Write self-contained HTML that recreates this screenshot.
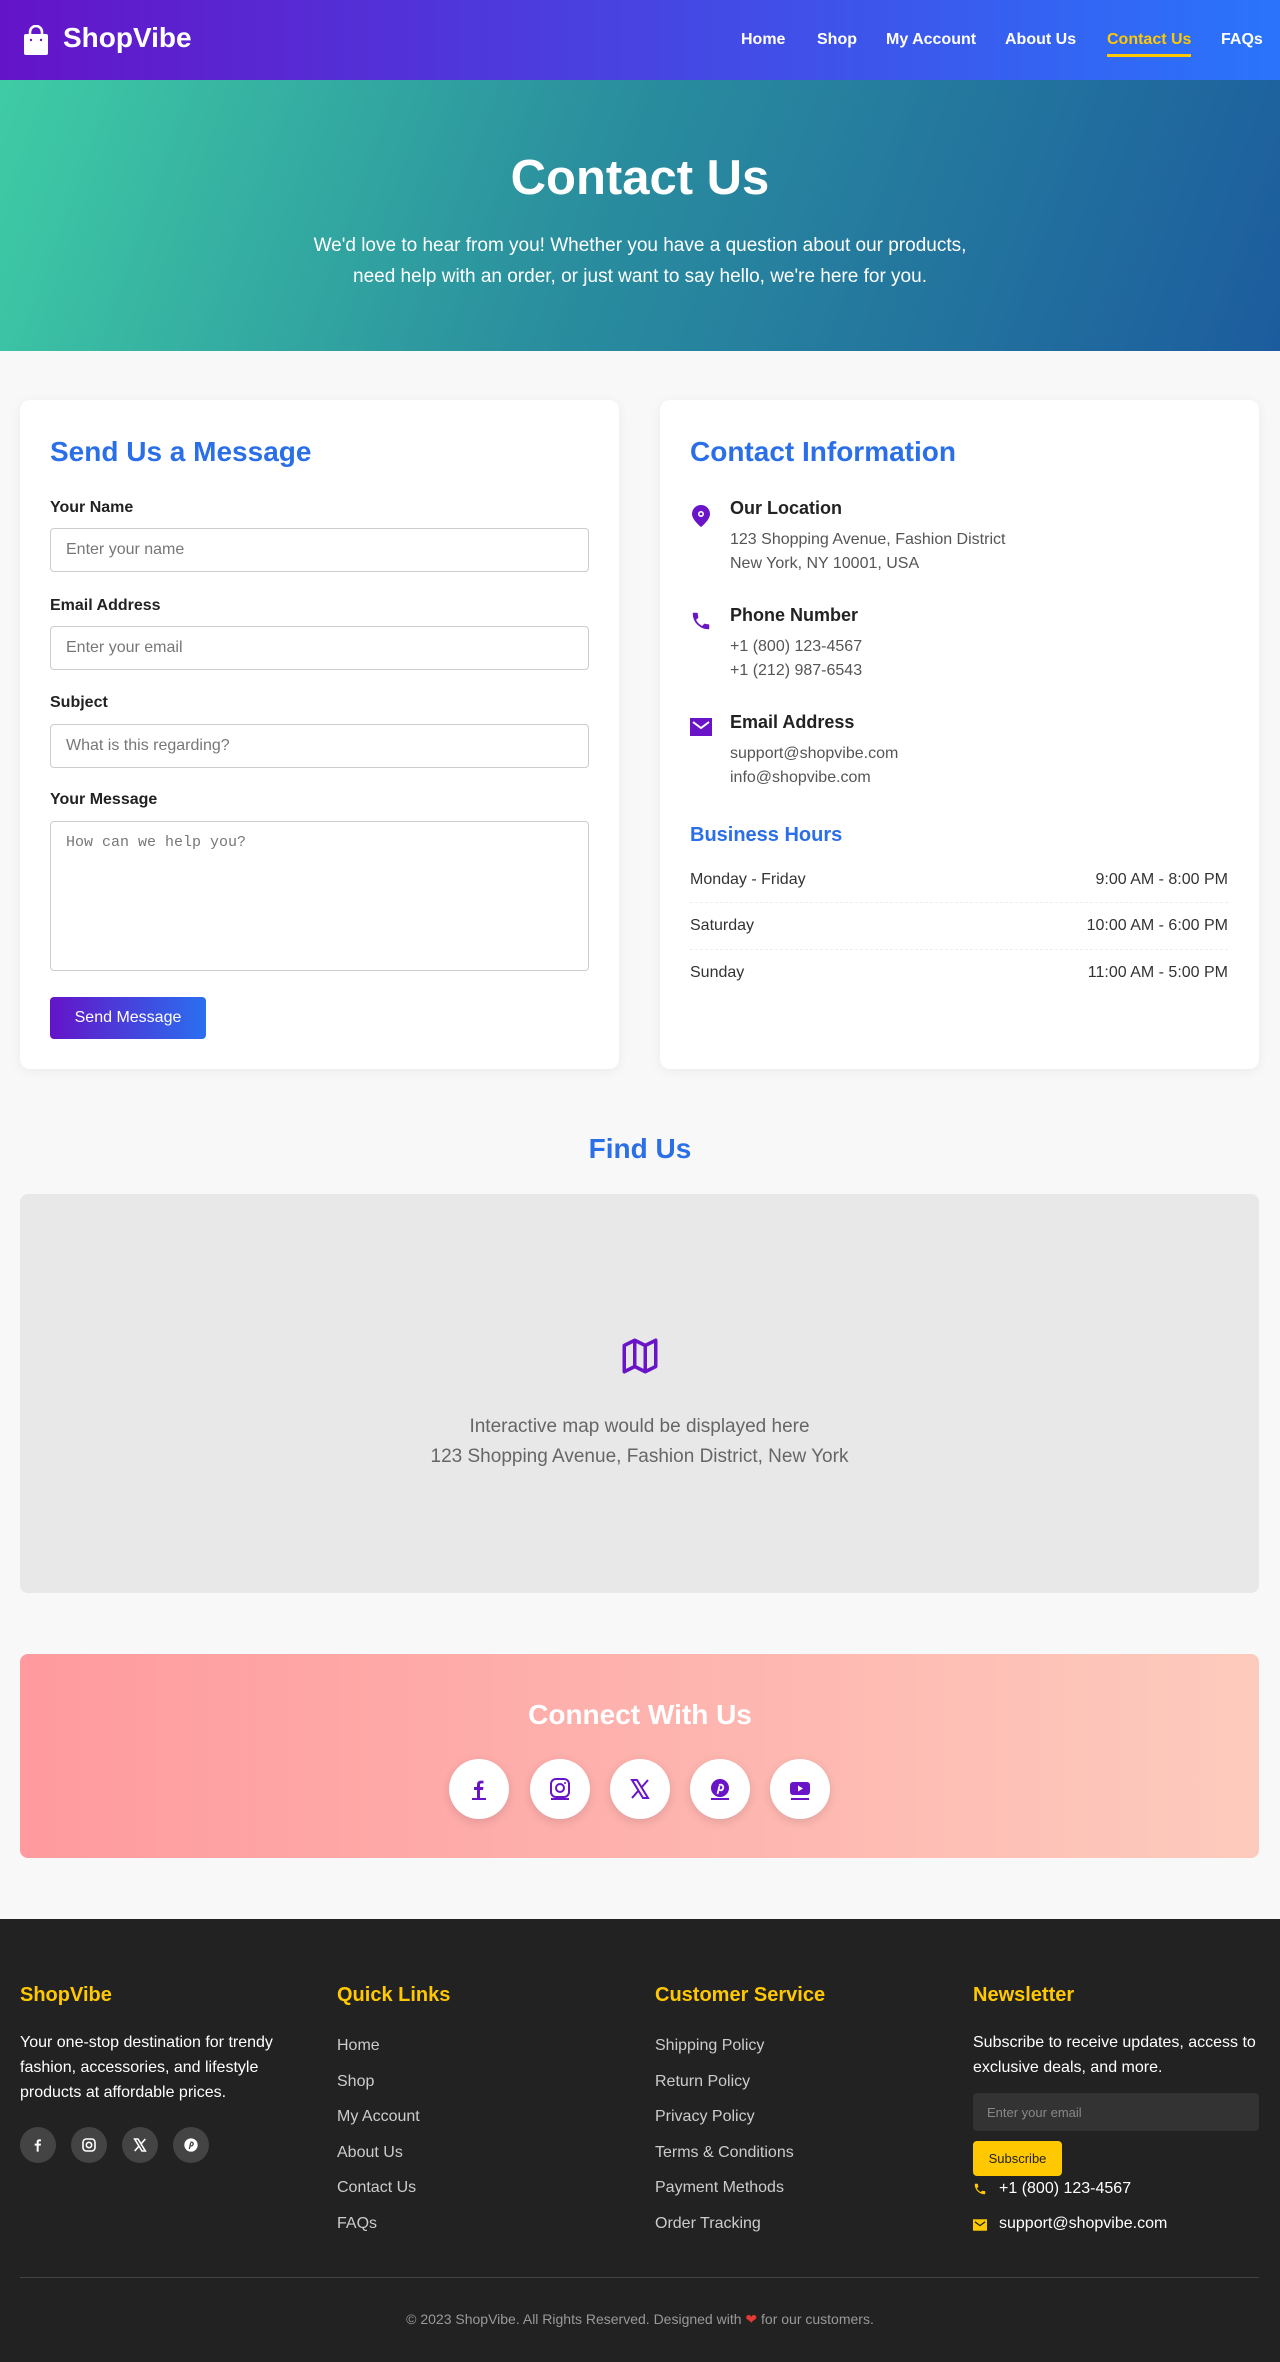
<!DOCTYPE html>
<html><head><meta charset="utf-8"><style>
*{box-sizing:border-box;margin:0;padding:0}
body{width:1280px;height:2362px;background:#f8f8f8;font-family:"Liberation Sans",sans-serif;color:#333;position:relative;overflow:hidden}
.abs{position:absolute}
nav{position:absolute;left:0;top:0;width:1280px;height:80px;background:linear-gradient(90deg,#6414c8,#2a74fb)}
.logo{position:absolute;left:63px;top:22px;color:#fff;font-weight:bold;font-size:28px}
.nav a{position:absolute;top:31px;color:#fff;font-weight:bold;font-size:16px;text-decoration:none}
.hero{position:absolute;top:80px;left:0;width:1280px;height:271px;background:linear-gradient(110deg,#3fcca5,#2a8f9e 45%,#1c5c9e);text-align:center;color:#fff}
.hero h1{position:absolute;top:70px;width:100%;font-size:49px}
.hero p{position:absolute;top:150px;width:100%;font-size:19px;line-height:31px}
.card{position:absolute;top:400px;height:669px;width:599px;background:#fff;border-radius:10px;box-shadow:0 2px 12px rgba(0,0,0,.06)}
.card h2{position:absolute;left:30px;top:36px;color:#2a6fe8;font-size:28px;white-space:nowrap}
.lbl{position:absolute;left:30px;font-size:16px;font-weight:bold;color:#222}
.inp{position:absolute;left:30px;width:539px;height:44px;border:1px solid #ccc;border-radius:4px;padding:12px 15px;font-size:16px;color:#777}
.ib{position:absolute;left:70px;font-size:18px;font-weight:bold;color:#222;white-space:nowrap}
.it{position:absolute;left:70px;font-size:16px;line-height:24px;color:#555;white-space:nowrap}
.ico{position:absolute;left:30px}
.hr{position:absolute;left:30px;width:538px;font-size:16px;color:#333}
.hr span{position:absolute;right:0}
.dv{position:absolute;left:30px;width:538px;border-top:1px dashed #eee}
.soc{position:absolute;top:1759px;width:60px;height:60px;border-radius:50%;background:#fff;box-shadow:0 3px 10px rgba(0,0,0,.12)}
.soc svg{position:absolute;left:18px;top:18px}
footer{position:absolute;top:1919px;left:0;width:1280px;height:443px;background:#222}
.fh{position:absolute;top:65px;color:#ffc800;font-size:20px;font-weight:bold}
.fl{position:absolute;font-size:16px;color:#ccc;line-height:35.5px}
.fs{position:absolute;top:2127px;width:36px;height:36px;border-radius:50%;background:#444}
.fs svg{position:absolute;left:10px;top:10px}
</style></head><body>
<nav>
<svg class="abs" style="left:23px;top:25px" width="26" height="30" viewBox="0 0 26 30"><path d="M7 11V7a6 6 0 0 1 12 0v4" fill="none" stroke="#fff" stroke-width="2.6"/><rect x="1" y="9" width="24" height="21" rx="2" fill="#fff"/><circle cx="8" cy="15" r="1.2" fill="#6414c8"/><circle cx="18" cy="15" r="1.2" fill="#6414c8"/></svg>
<div class="logo">ShopVibe</div>
<div class="nav">
<a style="left:741px">Home</a><a style="left:817px">Shop</a><a style="left:886px">My Account</a><a style="left:1005px">About Us</a><a style="left:1107px;color:#ffc800;border-bottom:3px solid #ffc800;padding-bottom:5px">Contact Us</a><a style="left:1221px">FAQs</a>
</div></nav>
<div class="hero"><h1>Contact Us</h1><p>We'd love to hear from you! Whether you have a question about our products,<br>need help with an order, or just want to say hello, we're here for you.</p></div>

<div class="card" style="left:20px">
<h2>Send Us a Message</h2>
<div class="lbl" style="top:99px">Your Name</div><div class="inp" style="top:128px">Enter your name</div>
<div class="lbl" style="top:197px">Email Address</div><div class="inp" style="top:226px">Enter your email</div>
<div class="lbl" style="top:294px">Subject</div><div class="inp" style="top:324px">What is this regarding?</div>
<div class="lbl" style="top:391px">Your Message</div><div class="inp" style="top:421px;height:150px;font-family:'Liberation Mono',monospace;font-size:15px">How can we help you?</div>
<div class="abs" style="left:30px;top:597px;width:156px;height:42px;border-radius:4px;background:linear-gradient(90deg,#6414c8,#2a6ff0);color:#fff;font-size:16px;text-align:center;line-height:42px">Send Message</div>
</div>

<div class="card" style="left:660px">
<h2>Contact Information</h2>
<svg class="ico" style="top:104px" width="22" height="24" viewBox="0 0 22 24"><path d="M11 1a9 9 0 0 0-9 9c0 6 9 13 9 13s9-7 9-13a9 9 0 0 0-9-9z" fill="#6a14c8"/><circle cx="11" cy="10" r="3" fill="#fff"/><circle cx="11" cy="10" r="1.4" fill="#6a14c8"/></svg>
<div class="ib" style="top:98px">Our Location</div>
<div class="it" style="top:128px">123 Shopping Avenue, Fashion District<br>New York, NY 10001, USA</div>
<svg class="ico" style="top:210px" width="22" height="22" viewBox="0 0 24 24"><path d="M6.6 10.8a15 15 0 0 0 6.6 6.6l2.2-2.2c.3-.3.7-.4 1-.2 1.1.4 2.3.6 3.6.6.6 0 1 .4 1 1V20c0 .6-.4 1-1 1A17 17 0 0 1 3 4c0-.6.4-1 1-1h3.5c.6 0 1 .4 1 1 0 1.3.2 2.5.6 3.6.1.3 0 .7-.2 1z" fill="#6a14c8"/></svg>
<div class="ib" style="top:205px">Phone Number</div>
<div class="it" style="top:235px">+1 (800) 123-4567<br>+1 (212) 987-6543</div>
<svg class="ico" style="top:318px" width="22" height="18" viewBox="0 0 22 18"><rect width="22" height="18" fill="#6a14c8"/><path d="M3 4l8 6 8-6" fill="none" stroke="#fff" stroke-width="2"/></svg>
<div class="ib" style="top:312px">Email Address</div>
<div class="it" style="top:342px">support@shopvibe.com<br>info@shopvibe.com</div>
<div class="abs" style="left:30px;top:424px;color:#2a6fe8;font-size:20px;font-weight:bold">Business Hours</div>
<div class="hr" style="top:471px">Monday - Friday<span>9:00 AM - 8:00 PM</span></div>
<div class="dv" style="top:502px"></div>
<div class="hr" style="top:517px">Saturday<span>10:00 AM - 6:00 PM</span></div>
<div class="dv" style="top:549px"></div>
<div class="hr" style="top:564px">Sunday<span>11:00 AM - 5:00 PM</span></div>
</div>

<div class="abs" style="top:1133px;width:1280px;text-align:center;color:#2a6fe8;font-size:28px;font-weight:bold">Find Us</div>
<div class="abs" style="left:20px;top:1194px;width:1239px;height:399px;background:#e8e8e8;border-radius:8px;text-align:center">
<svg class="abs" style="left:599px;top:141px" width="42" height="42" viewBox="0 0 24 24"><path d="M3 6l6-3 6 3 6-3v15l-6 3-6-3-6 3zM9 3v15M15 6v15" fill="none" stroke="#6a14c8" stroke-width="2" stroke-linejoin="round"/></svg>
<div class="abs" style="top:218px;width:100%;font-size:19px;line-height:30px;color:#666">Interactive map would be displayed here<br>123 Shopping Avenue, Fashion District, New York</div>
</div>

<div class="abs" style="left:20px;top:1654px;width:1239px;height:204px;border-radius:8px;background:linear-gradient(90deg,#ff9a9e,#fdcbbd)"></div>
<div class="abs" style="top:1699px;width:1280px;text-align:center;color:#fff;font-size:28px;font-weight:bold">Connect With Us</div>
<div class="soc" style="left:449px"><svg width="24" height="24" viewBox="0 0 24 24"><path d="M13 21v-8h3l.5-3H13V8c0-1 .3-1.6 1.7-1.6H16.5V3.7A24 24 0 0 0 14 3.6c-2.5 0-4 1.5-4 4.2V10H7v3h3v8z" fill="#6a14c8"/><rect x="5" y="21" width="14" height="2" fill="#6a14c8"/></svg></div>
<div class="soc" style="left:530px"><svg width="24" height="24" viewBox="0 0 24 24"><rect x="3" y="2" width="18" height="18" rx="5" fill="none" stroke="#6a14c8" stroke-width="2"/><circle cx="12" cy="11" r="4" fill="none" stroke="#6a14c8" stroke-width="2"/><circle cx="17" cy="6" r="1" fill="#6a14c8"/><rect x="3" y="21" width="18" height="2" fill="#6a14c8"/></svg></div>
<div class="soc" style="left:610px"><svg width="24" height="24" viewBox="0 0 24 24"><path d="M4 3h5l11 18h-5zM20 3l-7 8M4 21l7-8" fill="none" stroke="#6a14c8" stroke-width="2"/></svg></div>
<div class="soc" style="left:690px"><svg width="24" height="24" viewBox="0 0 24 24"><circle cx="12" cy="11" r="9" fill="#6a14c8"/><path d="M11 8c3-1 5 1 4 3.5s-3 2-3.5 1M11.5 9l-2 8" fill="none" stroke="#fff" stroke-width="1.8"/><rect x="3" y="21" width="18" height="2" fill="#6a14c8"/></svg></div>
<div class="soc" style="left:770px"><svg width="24" height="24" viewBox="0 0 24 24"><rect x="2" y="5" width="20" height="13" rx="3" fill="#6a14c8"/><path d="M10 8.5v6l5-3z" fill="#fff"/><rect x="3" y="21" width="18" height="2" fill="#6a14c8"/></svg></div>

<footer></footer>
<div class="fh" style="left:20px;top:1984px">ShopVibe</div>
<div class="fh" style="left:337px;top:1984px">Quick Links</div>
<div class="fh" style="left:655px;top:1984px">Customer Service</div>
<div class="fh" style="left:973px;top:1984px">Newsletter</div>
<div class="fl" style="left:20px;top:2030px;width:290px;color:#fff;line-height:25px;font-size:16px">Your one-stop destination for trendy fashion, accessories, and lifestyle products at affordable prices.</div>
<div class="fs" style="left:20px"><svg width="16" height="16" viewBox="0 0 24 24"><path d="M13 22v-9h3l.5-3H13V8c0-1 .3-1.6 1.7-1.6h1.8V3.7A24 24 0 0 0 14 3.6c-2.5 0-4 1.5-4 4.2V10H7v3h3v9z" fill="#fff"/></svg></div>
<div class="fs" style="left:71px"><svg width="16" height="16" viewBox="0 0 24 24"><rect x="3" y="3" width="18" height="18" rx="5" fill="none" stroke="#fff" stroke-width="2.4"/><circle cx="12" cy="12" r="4" fill="none" stroke="#fff" stroke-width="2.4"/></svg></div>
<div class="fs" style="left:122px"><svg width="16" height="16" viewBox="0 0 24 24"><path d="M4 3h5l11 18h-5zM20 3l-7 8M4 21l7-8" fill="none" stroke="#fff" stroke-width="2.4"/></svg></div>
<div class="fs" style="left:173px"><svg width="16" height="16" viewBox="0 0 24 24"><circle cx="12" cy="12" r="10" fill="#fff"/><path d="M11 8c3-1 5 1 4 3.5s-3 2-3.5 1M11.5 9l-2 9" fill="none" stroke="#444" stroke-width="2"/></svg></div>
<div class="fl" style="left:337px;top:2028px">Home<br>Shop<br>My Account<br>About Us<br>Contact Us<br>FAQs</div>
<div class="fl" style="left:655px;top:2028px">Shipping Policy<br>Return Policy<br>Privacy Policy<br>Terms &amp; Conditions<br>Payment Methods<br>Order Tracking</div>
<div class="fl" style="left:973px;top:2030px;width:290px;color:#fff;line-height:25px">Subscribe to receive updates, access to exclusive deals, and more.</div>
<div class="abs" style="left:973px;top:2093px;width:286px;height:38px;background:#333;border-radius:4px;color:#888;font-size:13px;padding:12px 14px">Enter your email</div>
<div class="abs" style="left:973px;top:2141px;width:89px;height:35px;background:#ffc800;border-radius:4px;color:#222;font-size:13px;text-align:center;line-height:35px">Subscribe</div>
<svg class="abs" style="left:973px;top:2182px" width="14" height="14" viewBox="0 0 24 24"><path d="M6.6 10.8a15 15 0 0 0 6.6 6.6l2.2-2.2c.3-.3.7-.4 1-.2 1.1.4 2.3.6 3.6.6.6 0 1 .4 1 1V20c0 .6-.4 1-1 1A17 17 0 0 1 3 4c0-.6.4-1 1-1h3.5c.6 0 1 .4 1 1 0 1.3.2 2.5.6 3.6.1.3 0 .7-.2 1z" fill="#ffc800"/></svg>
<div class="abs" style="left:999px;top:2180px;color:#fff;font-size:16px">+1 (800) 123-4567</div>
<svg class="abs" style="left:973px;top:2219px" width="14" height="12" viewBox="0 0 22 18"><rect width="22" height="18" fill="#ffc800"/><path d="M3 4l8 6 8-6" fill="none" stroke="#222" stroke-width="2"/></svg>
<div class="abs" style="left:999px;top:2215px;color:#fff;font-size:16px">support@shopvibe.com</div>
<div class="abs" style="left:20px;top:2277px;width:1239px;border-top:1px solid #444"></div>
<div class="abs" style="top:2311px;width:1280px;text-align:center;color:#999;font-size:14px">© 2023 ShopVibe. All Rights Reserved. Designed with <span style="color:#e53935">❤</span> for our customers.</div>
</body></html>
